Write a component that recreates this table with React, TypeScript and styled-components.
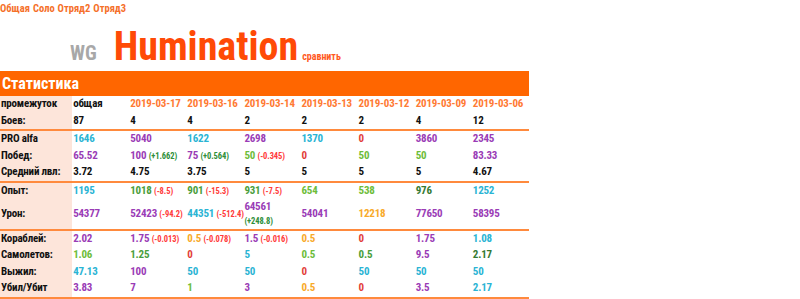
import React from "react";
import styled, { createGlobalStyle } from "styled-components";

const FONT = `"Liberation Sans Narrow", "Arial Narrow", "Roboto Condensed", "Liberation Sans", Arial, sans-serif`;

const GlobalStyle = createGlobalStyle`
  html, body { margin: 0; padding: 0; background: #fff; }
  body { font-family: ${FONT}; font-weight: bold; color: #111; }
`;

const Page = styled.div`
  width: 800px;
`;

const Nav = styled.nav`
  display: flex;
  gap: 3px;
  height: 17px;
  align-items: center;
  font-size: 10.5px;
`;

const NavLink = styled.a`
  color: #f5702a;
  text-decoration: none;
`;

const Header = styled.header`
  display: flex;
  align-items: baseline;
  box-sizing: border-box;
  padding: 6px 0 0 70px;
  height: 54px;
`;

const Brand = styled.span`
  color: #a8a8a8;
  font-size: 20px;
  margin-right: 17px;
`;

const Title = styled.h1`
  margin: 0;
  font-size: 40px;
  line-height: 48px;
  color: #ff4a06;
`;

const Compare = styled.a`
  font-size: 10px;
  color: #ff5a1f;
  margin-left: 4px;
  text-decoration: none;
`;

const Bar = styled.div`
  width: 529px;
  height: 25px;
  background: #ff6600;
  color: #fff;
  font-size: 16px;
  line-height: 25px;
  padding-left: 2px;
  box-sizing: border-box;
`;

const Table = styled.table`
  width: 529px;
  table-layout: fixed;
  border-collapse: collapse;
  font-size: 11px;
  letter-spacing: -0.2px;
`;

const Section = styled.tbody`
  border-bottom: 2px solid #ff8a3d;
`;

const Label = styled.td`
  background: #fde5da;
  padding: 1px 1px;
  line-height: 14.5px;
  white-space: nowrap;
  color: #111;
  font-size: 11px;
`;

const colors: Record<string, string> = {
  k: "#111111",
  h: "#ff7a33",
  c: "#2ab4d4",
  p: "#9a3cb6",
  lg: "#6dbd3a",
  g: "#4a9e3c",
  dg: "#357a32",
  r: "#e2403a",
  o: "#f8aa2a",
};

const Cell = styled.td<{ $c: string }>`
  padding: 1px 1px;
  line-height: 14.5px;
  white-space: nowrap;
  vertical-align: middle;
  color: ${(p) => colors[p.$c]};
  overflow: visible;
`;

const Delta = styled.span<{ $up: boolean; $block: boolean }>`
  font-size: 8.5px;
  letter-spacing: -0.1px;
  color: ${(p) => (p.$up ? "#2f8f3a" : "#ff3b3b")};
  display: ${(p) => (p.$block ? "block" : "inline")};
  line-height: ${(p) => (p.$block ? "13px" : "inherit")};
`;

type C = { v: string; c: string; d?: string; s?: boolean };
type Row = { label: string; cells: C[] };

const mk = (vals: string, cols: string): C[] => {
  const v = vals.split(" ");
  const c = cols.split(" ");
  return v.map((x, i) => ({ v: x, c: c[i] }));
};

const sections: Row[][] = [
  [
    {
      label: "промежуток",
      cells: [
        { v: "общая", c: "k" },
        ...mk(
          "2019-03-17 2019-03-16 2019-03-14 2019-03-13 2019-03-12 2019-03-09 2019-03-06",
          "h h h h h h h"
        ),
      ],
    },
    { label: "Боев:", cells: mk("87 4 4 2 2 2 4 12", "k k k k k k k k") },
  ],
  [
    { label: "PRO alfa", cells: mk("1646 5040 1622 2698 1370 0 3860 2345", "c p c p c r p p") },
    {
      label: "Побед:",
      cells: (() => {
        const r = mk("65.52 100 75 50 0 50 50 83.33", "p p p lg r lg lg p");
        r[1].d = "+1.662";
        r[2].d = "+0.564";
        r[3].d = "-0.345";
        return r;
      })(),
    },
    { label: "Средний лвл:", cells: mk("3.72 4.75 3.75 5 5 5 5 4.67", "k k k k k k k k") },
  ],
  [
    {
      label: "Опыт:",
      cells: (() => {
        const r = mk("1195 1018 901 931 654 538 976 1252", "c g g g lg lg dg c");
        r[1].d = "-8.5";
        r[2].d = "-15.3";
        r[3].d = "-7.5";
        return r;
      })(),
    },
    {
      label: "Урон:",
      cells: (() => {
        const r = mk("54377 52423 44351 64561 54041 12218 77650 58395", "p p c p p o p p");
        r[1].d = "-94.2";
        r[2].d = "-512.4";
        r[3].d = "+248.8";
        r[3].s = true;
        return r;
      })(),
    },
  ],
  [
    {
      label: "Кораблей:",
      cells: (() => {
        const r = mk("2.02 1.75 0.5 1.5 0.5 0 1.75 1.08", "p p o p o r p c");
        r[1].d = "-0.013";
        r[2].d = "-0.078";
        r[3].d = "-0.016";
        return r;
      })(),
    },
    { label: "Самолетов:", cells: mk("1.06 1.25 0 5 0.5 0.5 9.5 2.17", "lg g r c lg g p dg") },
    { label: "Выжил:", cells: mk("47.13 100 50 50 0 50 50 50", "c p c c r c c c") },
    { label: "Убил/Убит", cells: mk("3.83 7 1 3 0.5 0 3.5 2.17", "p p lg p o r p c") },
  ],
];

export default function App() {
  return (
    <Page>
      <GlobalStyle />
      <Nav>
        <NavLink href="#">Общая</NavLink>
        <NavLink href="#">Соло</NavLink>
        <NavLink href="#">Отряд2</NavLink>
        <NavLink href="#">Отряд3</NavLink>
      </Nav>
      <Header>
        <Brand>WG</Brand>
        <Title>Humination</Title>
        <Compare href="#">сравнить</Compare>
      </Header>
      <Bar>Статистика</Bar>
      <Table>
        <colgroup>
          <col style={{ width: 72 }} />
          {Array.from({ length: 8 }).map((_, i) => (
            <col key={i} style={{ width: 57 }} />
          ))}
        </colgroup>
        {sections.map((sec, si) => (
          <Section key={si}>
            {sec.map((row) => (
              <tr key={row.label}>
                <Label>{row.label}</Label>
                {row.cells.map((cell, ci) => (
                  <Cell key={ci} $c={cell.c}>
                    {cell.v}
                    {cell.d && (
                      <>
                        {cell.s ? "" : " "}
                        <Delta $up={cell.d.startsWith("+")} $block={!!cell.s}>
                          ({cell.d})
                        </Delta>
                      </>
                    )}
                  </Cell>
                ))}
              </tr>
            ))}
          </Section>
        ))}
      </Table>
    </Page>
  );
}
